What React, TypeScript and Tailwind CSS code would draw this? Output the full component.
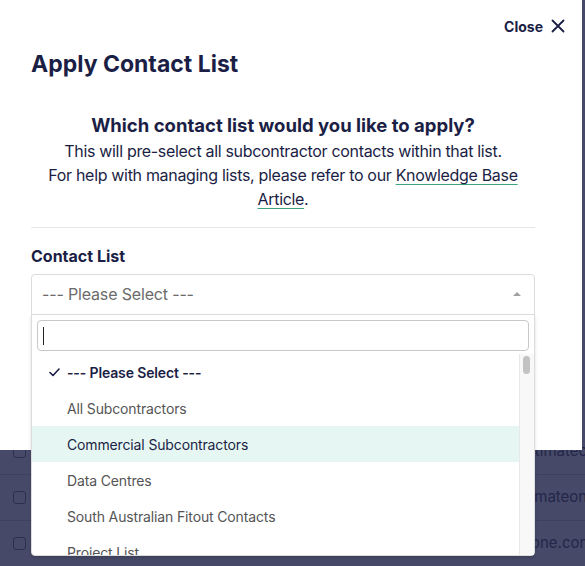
import React from "react";

const rows = [
  { email: "hello.estimateone.com", shift: "pl-[480px]" },
  { email: "info@estimateone.com", shift: "pl-[468px]" },
  { email: "team@estimateone.com", shift: "pl-[421px]" },
];

const options = [
  "--- Please Select ---",
  "All Subcontractors",
  "Commercial Subcontractors",
  "Data Centres",
  "South Australian Fitout Contacts",
  "Project List",
];

export default function App() {
  return (
    <div
      className="relative h-[566px] w-[585px] overflow-hidden bg-[#464a68]"
      style={{ fontFamily: "Inter, 'Noto Sans', sans-serif" }}
    >
      {/* page behind the overlay */}
      <div className="flex flex-col pt-[429px]">
        {rows.map((r, i) => (
          <div
            key={i}
            className="relative flex h-[46px] items-center border-b border-[#3e4160]"
          >
            <span className="ml-[13px] h-[13px] w-[13px] rounded-[3px] border border-[#2c2f4d]" />
            <span className={`absolute left-0 top-0 flex h-full items-center whitespace-nowrap text-[15px] text-[#23264a] ${r.shift}`}>
              {r.email}
            </span>
          </div>
        ))}
      </div>

      {/* modal */}
      <div className="absolute left-0 top-0 h-[450px] w-[582px] bg-white">
        <div className="flex h-[52px] items-center justify-end pr-[17px]">
          <button className="flex items-center gap-[8px] text-[14px] font-bold text-[#1b1e45]">
            Close
            <svg width="14" height="14" viewBox="0 0 14 14" fill="none" stroke="#1b1e45" strokeWidth="1.8" strokeLinecap="round">
              <path d="M1.5 1.5l11 11M12.5 1.5l-11 11" />
            </svg>
          </button>
        </div>

        <div className="px-[31px]">
          <h1 className="text-[23px] leading-[24px] font-bold text-[#1b1e45]">Apply Contact List</h1>

          <div className="w-[504px] text-center text-[#1b1e45]">
            <h2 className="mt-[37px] text-[18.5px] leading-[24px] font-bold">
              Which contact list would you like to apply?
            </h2>
            <p className="mt-[2px] text-[16px] leading-[24px] tracking-[-0.02em]">
              This will pre-select all subcontractor contacts within that list.
              <br />
              For help with managing lists, please refer to our{" "}
              <a className="underline decoration-[#3ca37c] underline-offset-[3px]">
                Knowledge Base Article
              </a>
              .
            </p>
            <div className="mt-[16px] border-t border-[#e6e6e6]" />
          </div>

          <label className="mt-[16px] block text-[16px] leading-[24px] font-bold text-[#1b1e45]">
            Contact List
          </label>

          <div className="relative mt-[6px] w-[504px]">
            <div className="flex h-[41px] items-center justify-between rounded-t-[4px] border border-[#dcdcdc] pb-[2px] pl-[10px] pr-[13px]">
              <span className="text-[16px] tracking-[-0.01em] text-[#6b6b6b]">--- Please Select ---</span>
              <span className="h-0 w-0 border-x-[4px] border-b-[4px] border-x-transparent border-b-[#a0a0a0]" />
            </div>

            {/* dropdown */}
            <div className="absolute left-0 top-[40px] z-10 flex h-[242px] w-[504px] flex-col rounded-b-[4px] border border-[#dcdcdc] bg-white shadow-[0_2px_3px_rgba(0,0,0,0.15)]">
              <div className="px-[5px] pt-[5px]">
                <div className="flex h-[31px] items-center rounded-[4px] border border-[#c8c8c8] pl-[5px]">
                  <span className="h-[18px] w-px bg-[#222]" />
                </div>
              </div>
              <div className="mt-[3px] flex min-h-0 flex-1 overflow-hidden">
                <ul className="flex-1">
                  {options.map((o, i) => (
                    <li
                      key={o}
                      className={
                        "flex h-[36px] items-center text-[14px] tracking-[-0.01em] " +
                        (i === 0
                          ? "font-semibold text-[#1b1e45]"
                          : i === 2
                            ? "bg-[#e6f7f3] text-[#1b1e45]"
                            : "text-[#555]")
                      }
                    >
                      <span className="flex w-[35px] justify-end pr-[7px]">
                        {i === 0 && (
                          <svg width="11" height="9" viewBox="0 0 11 9" fill="none" stroke="#1b1e45" strokeWidth="1.6" strokeLinecap="round" strokeLinejoin="round">
                            <path d="M1 4.5l3 3L10 1" />
                          </svg>
                        )}
                      </span>
                      {o}
                    </li>
                  ))}
                </ul>
                <div className="w-[15px] border-l border-[#e8e8e8] bg-[#f8f8f8] pt-[2px]">
                  <div className="ml-[3px] h-[18px] w-[7px] rounded-full bg-[#c2c2c2]" />
                </div>
              </div>
            </div>
          </div>
        </div>
      </div>
    </div>
  );
}
